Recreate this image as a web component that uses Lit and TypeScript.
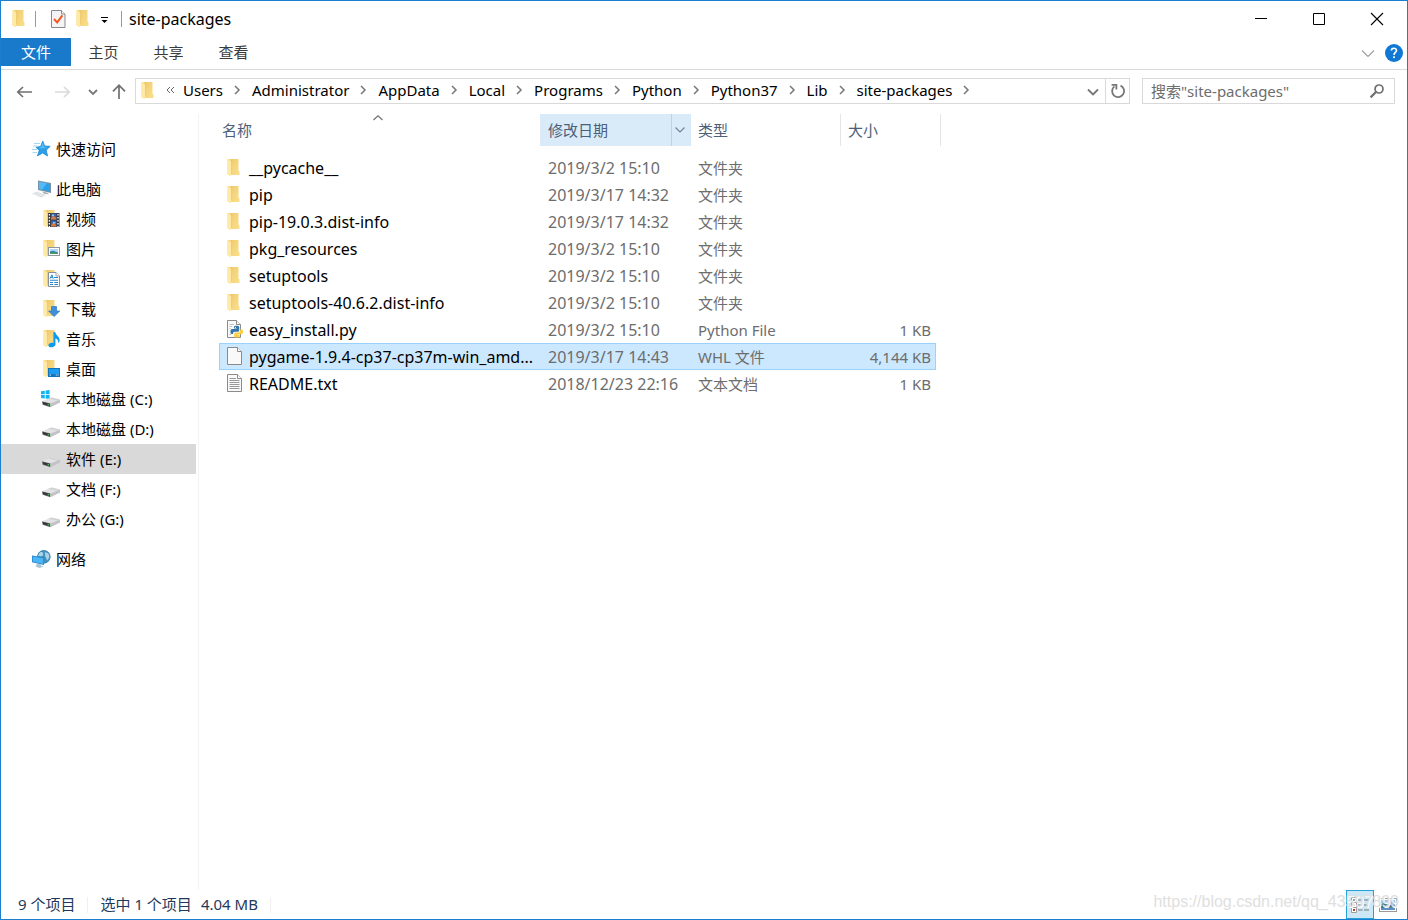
import { LitElement, html, svg, css, TemplateResult } from "lit";
import { customElement, state } from "lit/decorators.js";
import { classMap } from "lit/directives/class-map.js";

interface Place {
  label: string;
  icon: string;
}

interface PlaceGroup {
  root: Place;
  children: Place[];
}

interface Entry {
  name: string;
  icon: string;
  date: string;
  type: string;
  size: string;
}

const folderShape = svg`
  <defs>
    <linearGradient id="fback" x1="0" y1="0" x2="1" y2="1">
      <stop offset="0" stop-color="#eec96c"/>
      <stop offset="0.5" stop-color="#f5d67f"/>
      <stop offset="1" stop-color="#fadf8a"/>
    </linearGradient>
  </defs>
  <g transform="translate(1 0)">
    <path d="M3 0H11.5V11.5L12.5 12.5V16H3z" fill="url(#fback)"/>
    <path d="M3 0H0.5V15.2L3.6 17V3.2z" fill="#fbe08c"/>
    <path d="M0.5 0.6L4.4 2.6V14.6L3.6 17L0.5 15.2z" fill="#ffe9a6"/>
    <path d="M4.5 1.5V14.5" stroke="#e9c265" stroke-width="0.6"/>
  </g>`;

const driveShape = svg`
  <path d="M0 11.2L9.5 7.4L18 9.4L8.5 13.4z" fill="#e2e2e4"/>
  <path d="M9.5 7.4L18 9.4L15 10.6L6 8.8z" fill="#d2d2d5"/>
  <path d="M0 11.2L8.5 13.4V17.2L0.6 14.8z" fill="#6a6d6f"/>
  <path d="M0.6 12L7.9 13.8V16.4L1.2 14.2z" fill="#34383a"/>
  <path d="M8.5 13.4L18 9.4V12.6L8.5 17.2z" fill="#c2c3c6"/>
  <rect x="5.6" y="14.1" width="1.6" height="1.3" fill="#3fd04a"/>`;

const pageShape = svg`
  <path d="M0.5 0.5H10.5L14.5 4.5V17.5H0.5z" fill="#f9f9f9" stroke="#8b8b8b"/>
  <path d="M10.5 0.5V4.5H14.5" fill="#fff" stroke="#8b8b8b"/>`;

const shapes: Record<string, TemplateResult> = {
  folder: folderShape,
  star: svg`
    <path d="M10.8 1L12.6 6L18.2 6.3L14.2 10.2L15.6 16L10.6 13L5.4 16L7.2 10.4L4 7.2L8.6 6.4z" fill="#2c9fe6" stroke="#1480c8" stroke-width="0.7"/>
    <path d="M10.8 2.6L12 6.8L16 7L10.4 8.4L6.4 7.9L9.2 7.1z" fill="#56bdf8"/>
    <path d="M2 3.5H8M1 6H5M0 9.5H5M0.5 12.5H5" stroke="#8ccbf0" stroke-width="0.8"/>`,
  pc: svg`
    <path d="M6 0.5L19 3V13L6 10z" fill="#7f8f9c"/>
    <path d="M6.9 1.7L18.1 3.9V11.7L6.9 9.1z" fill="#2b9fea"/>
    <path d="M6.9 1.7L15 3.3L10 9.8L6.9 9.1z" fill="#55b9f7"/>
    <path d="M10 11.5L15 12.6L17 14.4L12 13.8z" fill="#a8b1b8"/>
    <path d="M0 13.6L5 11.8L14 15L9.4 17.4z" fill="#d8dbde"/>
    <path d="M2 13.4L10.8 16.4M4 12.6L12.4 15.5" stroke="#f4f5f6" stroke-width="0.6"/>`,
  network: svg`
    <circle cx="11.8" cy="6.8" r="6.6" fill="#4390bd"/>
    <path d="M7.4 2.4C10.4 1 12.4 3.2 10.8 5.4C9.4 7 6.9 5.8 5.6 6.2zM13 2L16.6 3.6L17.6 7.3L15.2 10.4L13.2 6.2z" fill="#a9d3e6"/>
    <circle cx="11.8" cy="6.8" r="6.3" fill="none" stroke="#3a7ea8" stroke-width="0.7"/>
    <path d="M0 5.4L12 7.6V15L0 12.2z" fill="#2886cf"/>
    <path d="M0.8 6.4L11.2 8.3V13.9L0.8 11.5z" fill="#4bb6f7"/>
    <path d="M5 13.5L9 14.4V15.8L11.5 16.8L7 18L3.5 16.2z" fill="#a9c4d4"/>`,
  video: svg`${folderShape}
    <rect x="6" y="3" width="11.5" height="14" fill="#3a3a3c"/>
    <rect x="9" y="3.6" width="5.4" height="6" fill="#3567b8"/>
    <rect x="9" y="10.6" width="5.4" height="6" fill="#3567b8"/>
    <path d="M9 8L11.5 5.5L14.4 8.4V9.6H9zM9 15L11.5 12.5L14.4 15.4V16.6H9z" fill="#d6793c"/>
    <path d="M10 4.5H12V6H10zM11 12H13.4V13.4H11z" fill="#8dc2f0"/>
    <path d="M7.4 4V17M16 4V17" stroke="#fff" stroke-width="1.3" stroke-dasharray="1.5 1.5"/>`,
  pictures: svg`${folderShape}
    <rect x="6.5" y="7.5" width="11" height="8" fill="#fff" stroke="#8e979e"/>
    <rect x="8" y="9" width="8" height="5" fill="#a9d7f5"/>
    <path d="M8 11.5L11 10.8L16 12.4V14H8z" fill="#3c7ea4"/>
    <path d="M8 13L11 12.6L16 13.4V14H8z" fill="#49a05b"/>`,
  documents: svg`${folderShape}
    <path d="M6.5 2.5H14L17.5 6V16.5H6.5z" fill="#fff" stroke="#8a9299"/>
    <path d="M14 2.5V6H17.5" fill="#fff" stroke="#8a9299" stroke-width="0.8"/>
    <path d="M8 8.6L10 4.8L11.2 8.6M8.8 7.4H10.8" fill="none" stroke="#2788cf" stroke-width="1"/>
    <path d="M12 7.5H16M8 10.3H16M8 12.5H11M12.3 12.5H16M8 14.5H11M12.3 14.5H16" stroke="#2788cf" stroke-width="1.1"/>`,
  downloads: svg`${folderShape}
    <path d="M9.5 6.5H14.5V11H17.8L12 16.6L6.6 11H9.5z" fill="#3f8fd9" stroke="#2c78c2" stroke-width="0.7"/>`,
  music: svg`${folderShape}
    <path d="M11.4 2H13.2C13.4 5 18 6.6 17.6 10.4C17.5 11.8 16.8 12.6 16.2 13C16.6 10.4 15.4 9 13.4 8.4V14.4C13.2 17.6 6.6 18.4 6.4 15.4C6.4 13 9.4 12.2 11.4 13z" fill="#0c9af0"/>`,
  desktop: svg`${folderShape}
    <rect x="6.5" y="8.5" width="11" height="8" fill="#1c9df2" stroke="#1474b8"/>
    <path d="M7 15H17" stroke="#0f5f9c" stroke-width="1.2"/>
    <path d="M7.6 15H9M13.8 15H14.8M15.6 15H16.6" stroke="#fff" stroke-width="0.9"/>`,
  system: svg`
    <path d="M-1 1.2L2.8 0.7V4.2H-1zM3.6 0.6L7.6 0V4.2H3.6zM-1 5H2.8V8.4L-1 8zM3.6 5H7.6V9L3.6 8.5z" fill="#12b4f2"/>
    ${driveShape}`,
  drive: driveShape,
  python: svg`<g transform="translate(0 -1)">
    <path d="M1.5 0.5H10.5L14.5 4.5V17.5H1.5z" fill="#fafafa" stroke="#8b8b8b"/>
    <path d="M10.5 0.5V4.5H14.5" fill="#fff" stroke="#8b8b8b"/>
    <path d="M3.5 4.5H8M3.5 6.5H6M3.5 8.5H4.5M3.5 14.5H5" stroke="#c0c0c0"/>
    <path d="M8 6.8C8 5.4 13.2 5.4 13.2 7V10.2C13.2 11.6 12.4 11.8 11.4 11.8H8.6C7.6 11.8 7 12.6 7 14H5.6C4 14 4 9 6 9H10.6V8.4H8z" fill="#3474a8"/>
    <path d="M14.2 9.2H15.6C17.6 9.4 17.6 14 15.6 14.2H11V14.8H13.6V16.4C13.6 18 8.2 18 8.2 16.2V13.8C8.2 13 9 12.6 9.8 12.6H12.4C13.6 12.6 14.2 11.8 14.2 10.8z" fill="#fbd040"/>
    <circle cx="9.4" cy="7.3" r="0.6" fill="#fff"/></g>`,
  file: svg`<g transform="translate(1 -1)">${pageShape}</g>`,
  text: svg`<g transform="translate(1 -1)">${pageShape}
    <path d="M2.5 4.5H9M2.5 6.5H12.5M2.5 8.5H12.5M2.5 10.5H12.5M2.5 12.5H12.5M2.5 14.5H12.5" stroke="#999"/></g>`,
};

const icon = (name: string) => html`
  <svg width="18" height="18" viewBox="0 0 18 18" aria-hidden="true">${shapes[name]}</svg>`;

const chevron = (points: string, size: number, color: string, weight: number) => html`
  <svg width=${size} height=${size} viewBox="0 0 14 14" aria-hidden="true">
    <path d=${points} fill="none" stroke=${color} stroke-width=${weight}/>
  </svg>`;

@customElement("app-root")
export class AppRoot extends LitElement {
  @state() private selected = 7;

  private crumbs = ["Users", "Administrator", "AppData", "Local", "Programs", "Python", "Python37", "Lib", "site-packages"];

  private groups: PlaceGroup[] = [
    { root: { label: "快速访问", icon: "star" }, children: [] },
    {
      root: { label: "此电脑", icon: "pc" },
      children: [
        { label: "视频", icon: "video" },
        { label: "图片", icon: "pictures" },
        { label: "文档", icon: "documents" },
        { label: "下载", icon: "downloads" },
        { label: "音乐", icon: "music" },
        { label: "桌面", icon: "desktop" },
        { label: "本地磁盘 (C:)", icon: "system" },
        { label: "本地磁盘 (D:)", icon: "drive" },
        { label: "软件 (E:)", icon: "drive" },
        { label: "文档 (F:)", icon: "drive" },
        { label: "办公 (G:)", icon: "drive" },
      ],
    },
    { root: { label: "网络", icon: "network" }, children: [] },
  ];

  private entries: Entry[] = [
    { name: "__pycache__", icon: "folder", date: "2019/3/2 15:10", type: "文件夹", size: "" },
    { name: "pip", icon: "folder", date: "2019/3/17 14:32", type: "文件夹", size: "" },
    { name: "pip-19.0.3.dist-info", icon: "folder", date: "2019/3/17 14:32", type: "文件夹", size: "" },
    { name: "pkg_resources", icon: "folder", date: "2019/3/2 15:10", type: "文件夹", size: "" },
    { name: "setuptools", icon: "folder", date: "2019/3/2 15:10", type: "文件夹", size: "" },
    { name: "setuptools-40.6.2.dist-info", icon: "folder", date: "2019/3/2 15:10", type: "文件夹", size: "" },
    { name: "easy_install.py", icon: "python", date: "2019/3/2 15:10", type: "Python File", size: "1 KB" },
    { name: "pygame-1.9.4-cp37-cp37m-win_amd...", icon: "file", date: "2019/3/17 14:43", type: "WHL 文件", size: "4,144 KB" },
    { name: "README.txt", icon: "text", date: "2018/12/23 22:16", type: "文本文档", size: "1 KB" },
  ];

  static styles = css`
    :host {
      display: block;
      font-family: "Noto Sans", "Noto Sans CJK SC", sans-serif;
      font-size: 15px;
      line-height: 20px;
      color: #000;
    }
    * { box-sizing: border-box; }
    button {
      font: inherit;
      color: inherit;
      background: none;
      border: 0;
      padding: 0;
      margin: 0;
      display: flex;
      align-items: center;
      justify-content: center;
      white-space: nowrap;
    }
    svg { display: block; flex: none; overflow: visible; }
    .window {
      position: relative;
      display: flex;
      flex-direction: column;
      height: 100vh;
      background: #fff;
      border: 1px solid #1a7fcf;
    }
    .titlebar { display: flex; height: 37px; align-items: center; padding: 0 1px 2px 10px; }
    .rule { width: 1px; height: 16px; background: #999; }
    .lead { margin-left: 6px; }
    .quick { display: flex; align-items: center; gap: 8px; padding: 0 8px 0 13px; }
    .title { padding-left: 7px; font-size: 16px; font-weight: 400; margin: 0; flex: 1; }
    .caption { width: 58px; height: 35px; }
    .tabs { display: flex; height: 32px; border-bottom: 1px solid #dadbdc; }
    .tab { width: 65px; height: 28px; color: #3b3b3b; }
    .tab.primary { width: 70px; background: #1979ca; color: #fff; }
    .tabs .help { margin-left: auto; display: flex; align-items: center; gap: 9px; padding-right: 3px; height: 30px; }
    .address { display: flex; align-items: center; height: 44px; padding: 0 12px 2px 15px; }
    .arrows { display: flex; align-items: center; gap: 19px; width: 119px; flex: none; }
    .arrows .recent { margin-left: -5px; }
    .arrows .up { margin-left: -7px; }
    .path { display: flex; flex: 1; min-width: 0; height: 26px; border: 1px solid #d9d9d9; padding-left: 4px; align-items: center; }
    .crumbs { display: flex; flex: 1; min-width: 0; align-items: center; list-style: none; padding: 0 0 2px; margin: 0; }
    .crumbs li { display: flex; align-items: center; }
    .crumbs .more { width: 25px; justify-content: center; }
    .crumbs svg { margin: 0 8px 0 7px; }
    .crumbs .more svg { margin: 0; }
    .path .drop { width: 24px; height: 24px; }
    .path .refresh { width: 24px; height: 24px; border-left: 1px solid #d9d9d9; }
    .search { display: flex; align-items: center; width: 253px; height: 26px; margin-left: 12px; padding: 0 8px; border: 1px solid #d9d9d9; }
    .search input { flex: 1; min-width: 0; border: 0; padding: 0; outline: 0; font: inherit; background: none; }
    .search input::placeholder { color: #6d6d6d; opacity: 1; }
    .body { display: flex; flex: 1; min-height: 0; }
    .places { width: 198px; flex: none; border-right: 1px solid #f3f3f3; padding: 20px 2px 0 0; display: flex; flex-direction: column; gap: 10px; overflow: hidden; }
    .place { width: 100%; height: 30px; justify-content: flex-start; gap: 6px; padding-left: 31px; }
    .place.child { padding-left: 41px; }
    .place.current { background: #d9d9d9; }
    .files { flex: 1; min-width: 0; padding-left: 20px; overflow: hidden; }
    table { border-collapse: collapse; table-layout: fixed; width: 722px; }
    .name { width: 321px; }
    .date, .type { width: 150px; }
    .size { width: 96px; }
    .edge { width: 5px; }
    th { position: relative; height: 40px; padding: 0; font-weight: 400; color: #4c607a; vertical-align: top; }
    .head { display: flex; height: 32px; border-right: 1px solid #e5e5e5; }
    .head.first { border: 0; }
    .head.kind { margin-right: -1px; }
    .head.hot { background: #d9ebf9; border: 0; margin-right: -1px; }
    .head button { flex: 1; justify-content: flex-start; padding-left: 8px; }
    .head.first button { padding-left: 3px; }
    .head.hot .filter { flex: none; width: 20px; padding: 0 3px 0 0; justify-content: center; border-left: 1px solid #bdd3e5; }
    .sort { position: absolute; top: 0; left: 50%; margin-left: -9px; }
    td { height: 27px; padding: 0 0 0 8px; color: #6d6d6d; white-space: nowrap; overflow: hidden; }
    td.name { padding-left: 7px; color: #000; font-size: 16px; }
    td.date { font-size: 16px; }
    td.size { text-align: right; padding: 0 5px 0 0; }
    td.edge { padding: 0; }
    .file { display: flex; align-items: center; gap: 5px; }
    .selected td:not(.edge) { background: #cce8ff; box-shadow: inset 0 1px #99d1ff, inset 0 -1px #99d1ff; }
    .selected td.name { box-shadow: inset 0 1px #99d1ff, inset 0 -1px #99d1ff, inset 1px 0 #99d1ff; }
    .selected td.size { box-shadow: inset 0 1px #99d1ff, inset 0 -1px #99d1ff, inset -1px 0 #99d1ff; }
    .status { display: flex; align-items: center; height: 29px; padding-left: 17px; color: #1e395b; }
    .status .part { padding: 0 12px 2px 0; margin-right: 12px; border-right: 1px solid #f0f0f0; height: 16px; display: flex; align-items: center; gap: 9px; }
    .views { margin-left: auto; display: flex; padding-right: 5px; height: 29px; }
    .views button { width: 28px; height: 29px; }
    .views .on { background: #cce8f6; border: 1px solid #26a0da; }
    .watermark { position: absolute; right: 8px; bottom: 7px; font: 16px/20px "Liberation Sans", sans-serif; color: #e0e0e0; text-shadow: 1px 1px #fff; pointer-events: none; }
  `;

  private place(p: Place, child: boolean) {
    return html`<button class=${classMap({ place: true, child, current: p.label === "软件 (E:)" })}>
      ${icon(p.icon)}<span>${p.label}</span>
    </button>`;
  }

  render() {
    return html`
      <div class="window">
        <header class="titlebar">
          ${icon("folder")}
          <span class="rule lead"></span>
          <div class="quick">
            <button aria-label="属性">
              <svg width="18" height="18" viewBox="0 0 18 18">
                <path d="M2.5 0.5H12.5L16 4V17.5H2.5z" fill="#f4f4f6" stroke="#8a8a8a"/>
                <path d="M12.5 0.5V4H16" fill="#fff" stroke="#8a8a8a"/>
                <path d="M5 9L8.2 12.4L13.4 5.4" fill="none" stroke="#ee5a24" stroke-width="2"/>
              </svg>
            </button>
            <button aria-label="新建文件夹">${icon("folder")}</button>
            <button aria-label="自定义快速访问工具栏">
              <svg width="12" height="12" viewBox="0 0 12 12"><path d="M0 4.5H7" stroke="#000"/><path d="M0.5 7H6.5L3.5 10z" fill="#000"/></svg>
            </button>
          </div>
          <span class="rule"></span>
          <h1 class="title">site-packages</h1>
          <button class="caption" aria-label="最小化">
            <svg width="12" height="12" viewBox="0 0 12 12"><path d="M0 5.5H12" stroke="#000"/></svg>
          </button>
          <button class="caption" aria-label="最大化">
            <svg width="12" height="12" viewBox="0 0 12 12"><path d="M0.5 0.5H11.5V11.5H0.5z" fill="none" stroke="#000"/></svg>
          </button>
          <button class="caption" aria-label="关闭">
            <svg width="12" height="12" viewBox="0 0 12 12"><path d="M0 0L12 12M12 0L0 12" stroke="#000" stroke-width="1.1"/></svg>
          </button>
        </header>

        <nav class="tabs">
          <button class="tab primary">文件</button>
          <button class="tab">主页</button>
          <button class="tab">共享</button>
          <button class="tab">查看</button>
          <div class="help">
            <button aria-label="展开功能区">${chevron("M1 4.5L7 10.5L13 4.5", 14, "#a0a0a0", 1.2)}</button>
            <button aria-label="帮助">
              <svg width="20" height="20" viewBox="0 0 20 20">
                <circle cx="10" cy="10" r="9" fill="#0f78d4"/>
                <path d="M7.4 7.6C7.4 4.4 12.6 4.5 12.5 7.5C12.4 9.4 10 9.4 10 12" fill="none" stroke="#fff" stroke-width="1.6"/>
                <rect x="9.1" y="13.3" width="1.8" height="1.8" fill="#fff"/>
              </svg>
            </button>
          </div>
        </nav>

        <div class="address">
          <div class="arrows">
            <button aria-label="后退">
              <svg width="18" height="16" viewBox="0 0 18 16"><path d="M1.5 9H16M7 4L1.8 9L7 14" fill="none" stroke="#707070" stroke-width="1.7"/></svg>
            </button>
            <button aria-label="前进">
              <svg width="18" height="16" viewBox="0 0 18 16"><path d="M2 9H16.5M11 4L16.2 9L11 14" fill="none" stroke="#dadada" stroke-width="1.7"/></svg>
            </button>
            <button class="recent" aria-label="最近浏览的位置">${chevron("M4 6L8 10L12 6", 14, "#777", 1.8)}</button>
            <button class="up" aria-label="上移">
              <svg width="16" height="16" viewBox="0 0 16 16"><path d="M8 16V2.4M2 8.4L8 2.2L14 8.4" fill="none" stroke="#707070" stroke-width="1.7"/></svg>
            </button>
          </div>
          <div class="path">
            ${icon("folder")}
            <ol class="crumbs">
              <li class="more">
                <svg width="10" height="10" viewBox="0 0 10 10"><path d="M4 2L1 5L4 8M8 2L5 5L8 8" fill="none" stroke="#666" stroke-width="1"/></svg>
              </li>
              ${this.crumbs.map((c) => html`<li><button>${c}</button>${chevron("M5 3L9 7L5 11", 14, "#777", 1.5)}</li>`)}
            </ol>
            <button class="drop" aria-label="以前的位置">${chevron("M2 5.5L7 10.5L12 5.5", 14, "#777", 1.9)}</button>
            <button class="refresh" aria-label="刷新">
              <svg width="16" height="16" viewBox="0 0 16 16">
                <path d="M10.5 2.6A6 6 0 1 1 4.4 3.4" fill="none" stroke="#777" stroke-width="1.8"/>
                <path d="M1.6 1.8H6.4V6.6" fill="none" stroke="#777" stroke-width="1.8"/>
              </svg>
            </button>
          </div>
          <div class="search">
            <input type="search" aria-label="搜索" placeholder='搜索"site-packages"' />
            <svg width="18" height="18" viewBox="0 0 18 18">
              <circle cx="11" cy="7" r="4" fill="none" stroke="#707070" stroke-width="1.7"/>
              <path d="M8.2 9.8L2.6 15.4" stroke="#707070" stroke-width="2.2"/>
            </svg>
          </div>
        </div>

        <div class="body">
          <nav class="places">
            ${this.groups.map((g) => html`<div>${this.place(g.root, false)}${g.children.map((c) => this.place(c, true))}</div>`)}
          </nav>
          <main class="files">
            <table>
              <colgroup><col class="name" /><col class="date" /><col class="type" /><col class="size" /><col class="edge" /></colgroup>
              <thead>
                <tr>
                  <th>
                    <div class="head first"><button>名称</button></div>
                    <span class="sort">${chevron("M2.5 6L7 1.8L11.5 6", 14, "#6d6d6d", 1.1)}</span>
                  </th>
                  <th>
                    <div class="head hot">
                      <button>修改日期</button>
                      <button class="filter" aria-label="筛选">${chevron("M2.5 4.5L7 9L11.5 4.5", 14, "#6f8396", 1.1)}</button>
                    </div>
                  </th>
                  <th><div class="head kind"><button>类型</button></div></th>
                  <th colspan="2"><div class="head"><button>大小</button></div></th>
                </tr>
              </thead>
              <tbody>
                ${this.entries.map((e, i) => html`
                  <tr class=${classMap({ selected: i === this.selected })} @click=${() => (this.selected = i)}>
                    <td class="name"><div class="file">${icon(e.icon)}<span>${e.name}</span></div></td>
                    <td class="date">${e.date}</td>
                    <td class="type">${e.type}</td>
                    <td class="size">${e.size}</td>
                    <td class="edge"></td>
                  </tr>`)}
              </tbody>
            </table>
          </main>
        </div>

        <footer class="status">
          <span class="part">9 个项目</span>
          <span class="part"><span>选中 1 个项目</span><span>4.04 MB</span></span>
          <div class="views">
            <button class="on" aria-label="详细信息">
              <svg width="18" height="18" viewBox="0 0 18 18">
                <path d="M0.5 1.5H5.5V6.5H0.5zM0.5 6.5H5.5V11.5H0.5zM0.5 11.5H5.5V16.5H0.5z" fill="#fff" stroke="#a59c98"/>
                <path d="M2 3H4V5H2z" fill="#7fb4a0"/><path d="M2 8H4V10H2z" fill="#6b8fc9"/><path d="M2 13H4V15H2z" fill="#c0392b"/>
                <path d="M7 4H11.5M13 4H18M7 9H11.5M13 9H18M7 14H11.5M13 14H18" stroke="#777"/>
              </svg>
            </button>
            <button aria-label="大缩略图">
              <svg width="18" height="14" viewBox="0 0 18 14">
                <rect x="0.5" y="0.5" width="17" height="13" fill="#fff" stroke="#999"/>
                <rect x="2" y="2" width="14" height="10" fill="#8fc0ee"/>
                <path d="M2 6C6 4 9 8 16 7V12H2z" fill="#3f7676"/>
                <path d="M2 10L16 9V12H2z" fill="#5d8fc4"/>
              </svg>
            </button>
          </div>
        </footer>
        <div class="watermark">https://blog.csdn.net/qq_43597899</div>
      </div>
    `;
  }
}
